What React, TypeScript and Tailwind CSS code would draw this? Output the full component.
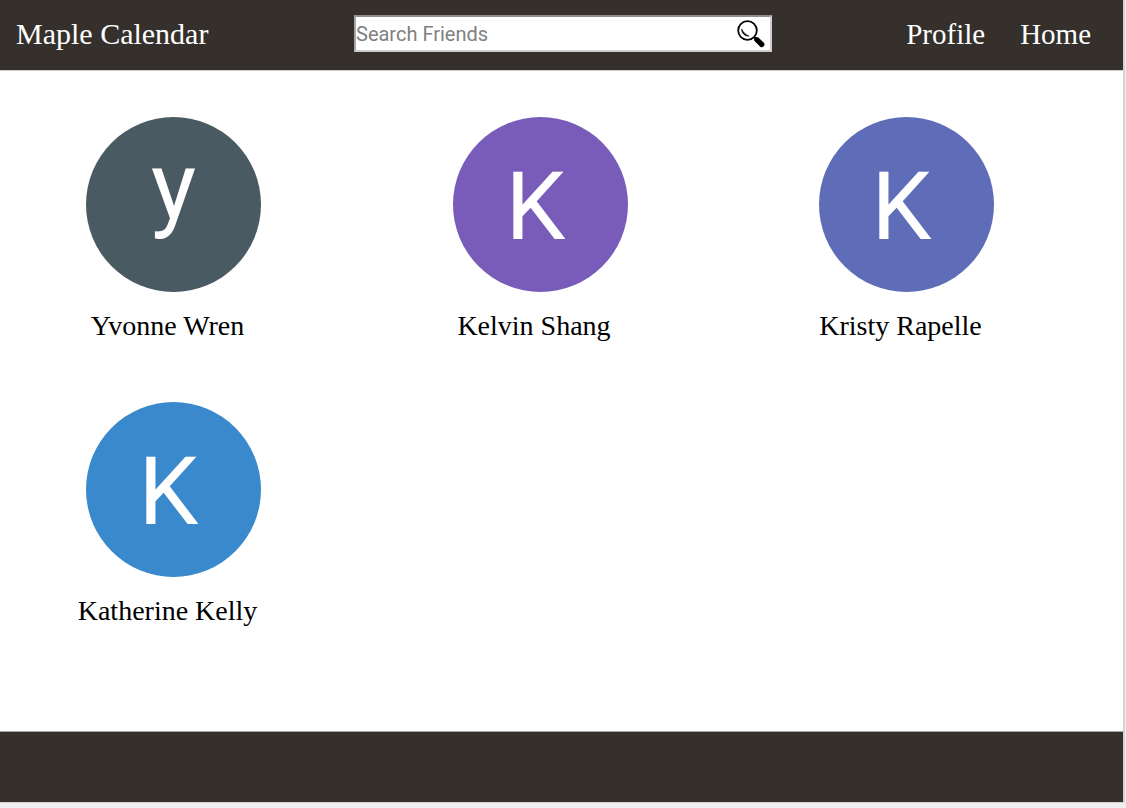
type Friend = {
  name: string;
  initial: string;
  disc: string;
};

const friends: Friend[] = [
  { name: "Yvonne Wren", initial: "y", disc: "fill-[#4a5a62]" },
  { name: "Kelvin Shang", initial: "K", disc: "fill-[#795cb9]" },
  { name: "Kristy Rapelle", initial: "K", disc: "fill-[#5f6db9]" },
  { name: "Katherine Kelly", initial: "K", disc: "fill-[#3a89cc]" },
];

function SearchIcon() {
  return (
    <svg viewBox="0 0 28 28" className="size-7" aria-hidden="true">
      <circle cx="10.500" cy="10.500" r="9.300" fill="none" stroke="#000" strokeWidth="1.800" />
      <path d="M4.700 9c-.2 4.200 3 7.300 7.300 7.100-2.800-1-5.800-3.500-7.300-7.100z" fill="#000" stroke="#000" strokeWidth="0.6" strokeLinejoin="round" />
      <path d="M16.800 16.800l3 3" stroke="#000" strokeWidth="2" />
      <path d="M19.800 19.700l5 4.800" stroke="#000" strokeWidth="5.200" strokeLinecap="round" />
    </svg>
  );
}

function Avatar({ initial, disc }: { initial: string; disc: string }) {
  // Initials are optically centred: a lowercase letter with a descender sits
  // higher, and a capital is centred without its right-hand overhang.
  const anchor = initial === "y" ? { x: 88, y: 103 } : { x: 83, y: 123 };
  return (
    <svg viewBox="0 0 176 176" className="block size-[175px]" aria-hidden="true">
      <circle cx="88" cy="88" r="88" className={disc} />
      <text
        x={anchor.x}
        y={anchor.y}
        textAnchor="middle"
        className="fill-white font-['Roboto',sans-serif] text-[96px]"
      >
        {initial}
      </text>
    </svg>
  );
}

function Header() {
  return (
    <header className="grid h-[71px] grid-cols-[354fr_418fr_351fr] items-center border-b border-[#cfcdcc] bg-[#36302d] pb-[3px] leading-9 text-white">
      <a href="#" className="justify-self-start pl-4 text-[30px] whitespace-nowrap">
        Maple Calendar
      </a>
      <form
        role="search"
        onSubmit={(event) => event.preventDefault()}
        className="flex h-[37px] items-center border-2 border-t-[#918c8e] border-r-[#cfcdce] border-b-[#cfcdce] border-l-[#a9a5a7] bg-white"
      >
        <input
          type="search"
          aria-label="Search Friends"
          placeholder="Search Friends"
          className="min-w-0 flex-1 bg-transparent font-['Roboto',sans-serif] text-xl text-black outline-none placeholder:text-[#808080]"
        />
        <button type="submit" aria-label="Search" className="mr-[5px]">
          <SearchIcon />
        </button>
      </form>
      <nav className="flex justify-end gap-[35px] pr-8 text-[29px]">
        <a href="#profile">Profile</a>
        <a href="#home">Home</a>
      </nav>
    </header>
  );
}

export default function App() {
  return (
    <div className="min-h-screen bg-[#efefef] pr-px pb-[5px] font-['Liberation_Serif',serif]">
      <div className="flex min-h-[calc(100vh-5px)] flex-col border-r-2 border-b border-[#d4d2d3] bg-white">
        <Header />
        <main className="flex-1 pt-[46px] pb-12">
          <ul className="grid grid-cols-[repeat(3,175px)] justify-between gap-y-[58px] pr-[129px] pl-[86px]">
            {friends.map((friend) => (
              <li key={friend.name} className="flex flex-col items-center">
                <Avatar initial={friend.initial} disc={friend.disc} />
                <p className="mt-4 pr-3 text-[28px] leading-9 whitespace-nowrap text-black">
                  {friend.name}
                </p>
              </li>
            ))}
          </ul>
        </main>
        <footer className="h-[71px] border-t border-[#a9a5a5] bg-[#36302d]" />
      </div>
    </div>
  );
}
